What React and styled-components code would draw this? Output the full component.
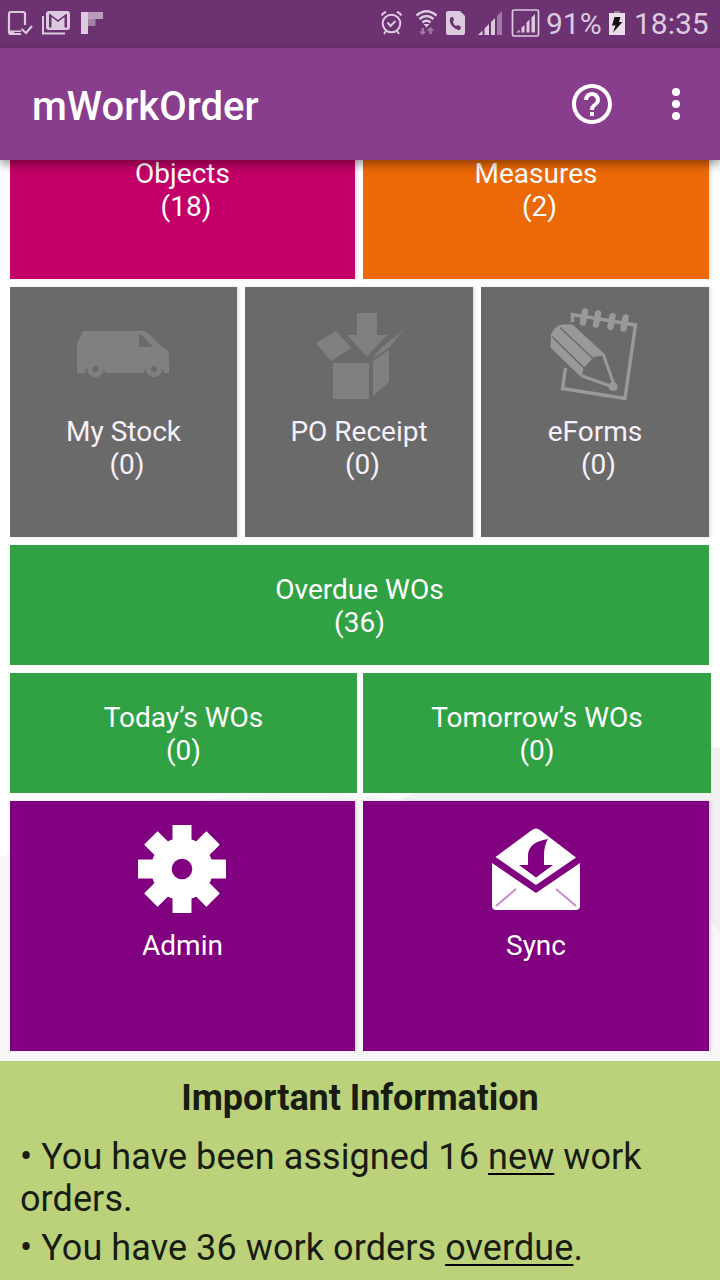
import React from "react";
import styled, { createGlobalStyle } from "styled-components";

const Global = createGlobalStyle`
  * { box-sizing: border-box; }
  body { margin: 0; background: #fff; font-family: Roboto, "Liberation Sans", sans-serif; }
`;

const Screen = styled.div`
  width: 720px;
  height: 1280px;
  display: flex;
  flex-direction: column;
  overflow: hidden;
`;

const StatusBar = styled.header`
  height: 48px;
  flex: none;
  background: #6c3272;
  color: #dccbde;
  display: flex;
  justify-content: space-between;
`;

const StatusText = styled.span`
  font-size: 30px;
  line-height: 48px;
  width: ${(p) => p.$width}px;
  white-space: nowrap;
`;

const StatusGroup = styled.div`
  display: flex;
`;

const AppBar = styled.div`
  height: 112px;
  flex: none;
  background: #883e8c;
  color: #fff;
  display: flex;
  align-items: center;
  padding: 4px 24px 0 32px;
  position: relative;
  z-index: 1;
  box-shadow: 0 4px 10px rgba(0, 0, 0, 0.42);
`;

const Title = styled.h1`
  flex: 1;
  margin: 0;
  padding-top: 2px;
  font-size: 40px;
  font-weight: 500;
  line-height: 48px;
`;

const BarButton = styled.button`
  width: 40px;
  height: 48px;
  padding: 0;
  border: 0;
  margin: 0 0 4px ${(p) => p.$gap || 0}px;
  background: none;
  display: flex;
  align-items: center;
  justify-content: center;
`;

const Content = styled.main`
  flex: none;
  height: 901px;
  overflow: hidden;
  display: flex;
  flex-direction: column;
  justify-content: flex-end;
  gap: 8px;
  padding: 0 9px 10px 10px;
  position: relative;
`;

const Watermark = styled.svg`
  position: absolute;
  inset: 0;
  z-index: -1;
`;

const Row = styled.div`
  flex: none;
  height: ${(p) => p.$height}px;
  display: grid;
  grid-template-columns: ${(p) => p.$columns};
  justify-content: start;
  column-gap: ${(p) => p.$gap || 8}px;
`;

const TileBox = styled.div`
  background: ${(p) => p.$color};
  color: ${(p) => (p.$dim ? "#f6f0fb" : "#fff")};
  box-shadow: ${(p) => (p.$flat ? "none" : "2px 0 3px rgba(0, 0, 0, 0.12)")};
  display: flex;
  flex-direction: column;
  align-items: center;
  padding-top: ${(p) => (p.$flat ? 28 : 18)}px;
`;

const IconSlot = styled.div`
  height: 110px;
  width: 110px;
  svg { display: block; }
`;

const Label = styled.div`
  font-size: 28px;
  line-height: 33px;
  text-align: center;
  white-space: pre;
`;

const InfoPanel = styled.section`
  flex: 1;
  background: #bbd27a;
  color: #191d11;
  padding: 16px 20px 0;
`;

const InfoTitle = styled.h2`
  margin: 0 0 17px;
  font-size: 36px;
  line-height: 42px;
  font-weight: 700;
  letter-spacing: -0.07px;
  text-align: center;
`;

const InfoLine = styled.p`
  margin: 0 0 7px;
  font-size: 36px;
  line-height: 42px;
  letter-spacing: 0.08px;
`;

const InfoLink = styled.span`
  text-decoration: underline #000 2px;
  text-underline-offset: 4px;
  text-decoration-skip-ink: none;
`;

const NotificationIcons = () => (
  <svg width="120" height="48" fill="#dccbde">
    <path d="M25 25V14a2 2 0 0 0-2-2H11a2 2 0 0 0-2 2V32a2 2 0 0 0 2 2H21" fill="none" stroke="#dccbde" strokeWidth="2.200" />
    <path d="M9 30.500h12v1.500H14v2H9z" />
    <path d="M21.500 29l4.500 4 6-7" fill="none" stroke="#dccbde" strokeWidth="2.200" />
    <path d="M43 16v17.500h22" fill="none" stroke="#dccbde" strokeWidth="2" />
    <path fillRule="evenodd" d="M49 11h18a3 3 0 0 1 3 3v13a3 3 0 0 1-3 3H49a3 3 0 0 1-3-3V14a3 3 0 0 1 3-3zM49 14v13.500h2.500V17l6.500 5 6.500-5v10.500H67V14h-1l-8 6-8-6z" />
    <path d="M81 12h7v22h-7z" />
    <path opacity=".7" d="M88 12h15v7H88z" />
    <path opacity=".5" d="M88 19h7.500v7H88z" />
  </svg>
);

const SystemIcons = () => (
  <svg width="168" height="48" viewBox="378 0 168 48" fill="#dccbde">
    <g fill="none" stroke="#dccbde" strokeWidth="2">
      <circle cx="391.500" cy="23.500" r="8.800" />
      <path d="M387.500 22.500l3 3.500 5-5M386 31l-2 3M397 31l2 3M381.500 15.500c1-1.800 2.500-3 4.500-3.800M401.500 15.500c-1-1.800-2.500-3-4.500-3.800" />
      <path d="M416.500 15.500Q426.500 7 436.500 15.500M419.500 19Q426.500 13 433.500 19M422.500 22.500Q426.500 19 430.500 22.500" strokeWidth="2.400" />
    </g>
    <path d="M423.500 24h6l-3 3.500z" />
    <path opacity=".48" d="M421.500 28h2.500v3.500h2.500L422.700 35 419 31.500h2.500zM430.500 27l4 3.800h-2.700V34h-2.600v-3.200h-2.700z" />
    <path d="M448 11h12l5 5v17a2 2 0 0 1-2 2h-15a2 2 0 0 1-2-2V13a2 2 0 0 1 2-2z" />
    <path d="M451 17c-4 5 3 13 9 13l1-3-3-2-2 1c-2-1-3-3-3-5l1-1-1-3z" fill="#6c3272" />
    <path d="M478 35l4.500-4.500V35zM484.500 28.500l4.500-4.500v11h-4.500zM491 22l4-4v17h-4z" />
    <path opacity=".48" d="M497 16l5-5v24h-5z" />
    <rect x="512.500" y="10" width="26" height="26" rx="1.500" fill="none" stroke="#dccbde" strokeWidth="1.700" />
    <path d="M516.500 32.500l3-3v3zM521.500 27.500l3-2.500v7.500h-3zM526.500 22.500l3-3v13h-3zM531.500 17.500l3.500-3.500V32.500h-3.500z" />
  </svg>
);

const BatteryIcon = () => (
  <svg width="30" height="48" viewBox="604 0 30 48">
    <path d="M614 11h6v3h-6z" fill="#a27ea6" />
    <path d="M609 13h16v22h-16z" fill="#e8dde9" />
    <path d="M614.500 17h6l-1.500 5h3.500L613 32.500l2.500-7H612z" fill="#151015" />
  </svg>
);

const HelpIcon = () => (
  <svg width="40" height="40" viewBox="2 2 20 20" fill="#fff">
    <path d="M11 18h2v-2h-2v2zm1-16C6.480 2 2 6.480 2 12s4.480 10 10 10 10-4.480 10-10S17.520 2 12 2zm0 18c-4.410 0-8-3.590-8-8s3.590-8 8-8 8 3.590 8 8-3.590 8-8 8zm0-14c-2.210 0-4 1.790-4 4h2c0-1.100.9-2 2-2s2 .9 2 2c0 2-3 1.750-3 5h2c0-2.250 3-2.500 3-5 0-2.210-1.790-4-4-4z" />
  </svg>
);

const MoreIcon = () => (
  <svg width="8" height="32" fill="#fff">
    <circle cx="4" cy="4" r="4" />
    <circle cx="4" cy="16" r="4" />
    <circle cx="4" cy="28" r="4" />
  </svg>
);

const VanIcon = () => (
  <svg width="110" height="110" viewBox="69 305 110 110">
    <path fillRule="evenodd" fill="#808080" d="M77 373V344l5-11q1-2 3-2h58q3 0 5 2l14 14 5 3q2 2 2 4v19h-5a10 10 0 0 0-20 0H105a10 10 0 0 0-20 0zM139 335v12h14l-9-10q-1-2-3-2z" />
    {[95.5, 154].map((x) => <circle key={x} cx={x} cy="369" r="5.700" fill="none" stroke="#808080" strokeWidth="5.200" />)}
  </svg>
);

const BoxIcon = () => (
  <svg width="110" height="110" viewBox="304 305 110 110" fill="#808080">
    <path d="M357 313h20v22h10l-20.500 21.500L347 335h10zM336 331l15.500 17L331 361l-15-18zM333 363h36v36h-36zM373 361l16-11v32l-16 14zM372 359l9-11 22-18-13 17z" />
  </svg>
);

const FormIcon = () => (
  <svg width="110" height="110" viewBox="540 305 110 110">
    <g fill="none" stroke="#999">
      <path d="M572.500 322v-7.500L635.500 325 625 398.500 562.500 388.500 565.500 368" strokeWidth="3.500" />
      <path d="M585 311.500l-2 11M598 313.500l-2 11M612.500 316l-2 11M625.500 317.500l-2 11" strokeWidth="6.500" strokeLinecap="round" />
      <path d="M603.500 355L615 387.500 582 376" strokeWidth="3" />
    </g>
    <path fill="#999" d="M551 335q2-7 9-10 7-1.500 13 0l32.500 30-11.500 2-10.500 11-2 9.500-31-30z" />
    <path d="M560 327.500l33 31M552 336.500l32 31.500" stroke="#6a6a6a" strokeWidth="1.400" />
    <circle cx="613" cy="386.500" r="4.500" fill="#999" />
  </svg>
);

const GearIcon = () => (
  <svg width="110" height="110" viewBox="128 819 110 110">
    <g fill="#fff">
      {[0, 45, 90, 135].map((a) => (
        <rect key={a} x="172.500" y="825" width="19" height="88" rx=".5" transform={`rotate(${a} 182 869)`} />
      ))}
      <circle cx="182" cy="869" r="31" />
    </g>
    <circle cx="182" cy="869" r="10.300" fill="#800080" />
  </svg>
);

const MailIcon = () => (
  <svg width="110" height="110" viewBox="481 819 110 110">
    <path fill="#fff" d="M495.500 857L532 830q4-3 8 0l36 27.500L536 885zM492 863l44 30 44-30v44q-1 3-4 3h-80q-3 0-4-3z" />
    <path fill="#800080" d="M519 865h9v-9q0-14 20-17-4 6-4 17v9h9l-17 12.500z" />
    <path d="M496 906l20-17M576 906l-20-17" stroke="#c78aca" strokeWidth="2" />
  </svg>
);

const Tile = ({ color, icon, label, count, flat, dim }) => (
  <TileBox $color={color} $flat={flat} $dim={dim}>
    {!flat && <IconSlot>{icon}</IconSlot>}
    <Label>{label}</Label>
    {count !== undefined && <Label>{`${flat ? "" : " "}(${count})`}</Label>}
  </TileBox>
);

export default function App() {
  return (
    <Screen>
      <Global />
      <StatusBar>
        <NotificationIcons />
        <StatusGroup>
          <SystemIcons />
          <StatusText $width={58}>91%</StatusText>
          <BatteryIcon />
          <StatusText $width={86}>18:35</StatusText>
        </StatusGroup>
      </StatusBar>
      <AppBar>
        <Title>mWorkOrder</Title>
        <BarButton aria-label="Help"><HelpIcon /></BarButton>
        <BarButton aria-label="More" $gap={44}><MoreIcon /></BarButton>
      </AppBar>
      <Content>
        <Watermark width="720" height="901" viewBox="0 160 720 901">
          <path d="M0 858C60 825 130 808 200 801C260 791 330 791 400 799V830H720V1061H0z" fill="#f7f7f7" />
          <path d="M398 802L415 792C500 760 620 735 720 748V932C690 890 640 850 560 830H398z" fill="#f0f0f0" />
        </Watermark>
        <Row $height={250} $columns="345px 346px">
          <Tile color="#c30067" label="Objects" count={18} />
          <Tile color="#ec6907" label="Measures" count={2} />
        </Row>
        <Row $height={250} $columns="227px 228px 228px">
          <Tile dim color="#6a6a6a" icon={<VanIcon />} label="My Stock" count={0} />
          <Tile dim color="#6a6a6a" icon={<BoxIcon />} label="PO Receipt" count={0} />
          <Tile dim color="#6a6a6a" icon={<FormIcon />} label="eForms" count={0} />
        </Row>
        <Row $height={120} $columns="699px">
          <Tile flat color="#31a244" label="Overdue WOs" count={36} />
        </Row>
        <Row $height={120} $columns="347px 348px" $gap={6}>
          <Tile flat color="#31a244" label="Today’s WOs" count={0} />
          <Tile flat color="#31a244" label="Tomorrow’s WOs" count={0} />
        </Row>
        <Row $height={250} $columns="345px 346px">
          <Tile color="#800080" icon={<GearIcon />} label="Admin" />
          <Tile color="#800080" icon={<MailIcon />} label="Sync" />
        </Row>
      </Content>
      <InfoPanel>
        <InfoTitle>Important Information</InfoTitle>
        <InfoLine>• You have been assigned 16 <InfoLink>new</InfoLink> work orders.</InfoLine>
        <InfoLine>• You have 36 work orders <InfoLink>overdue</InfoLink>.</InfoLine>
      </InfoPanel>
    </Screen>
  );
}
